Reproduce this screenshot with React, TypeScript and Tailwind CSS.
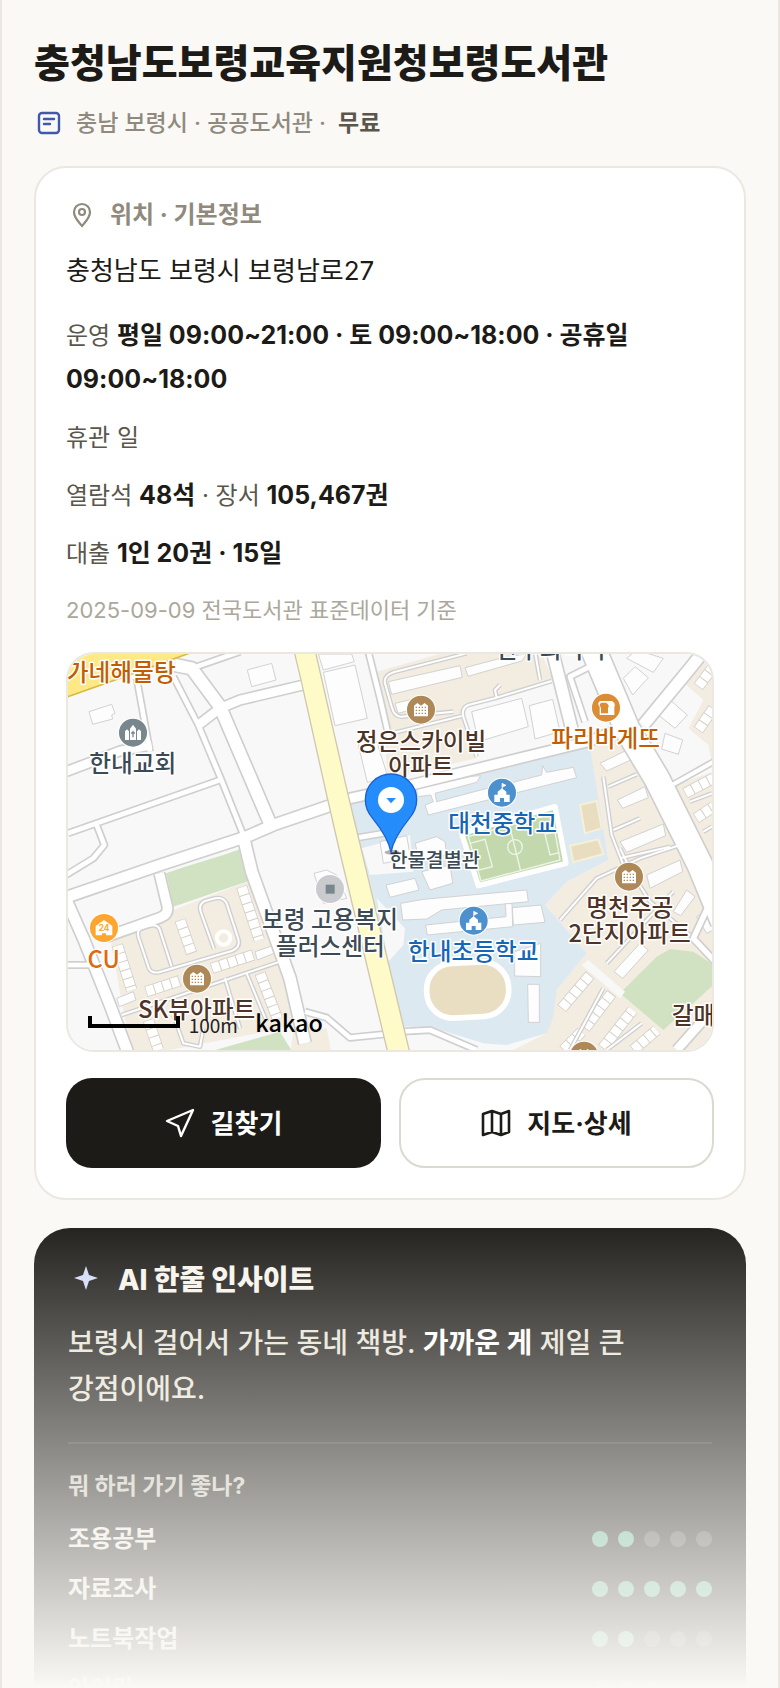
import type { ReactNode } from "react";

type Point = { label: string; score: number };

type Road = { d: string; w: number };

type MapLabel = {
  text: string;
  x: number;
  y: number;
  fill: string;
  size?: number;
  anchor?: "start" | "middle" | "end";
};

const points: Point[] = [
  { label: "조용공부", score: 2 },
  { label: "자료조사", score: 5 },
  { label: "노트북작업", score: 2 },
  { label: "아이랑", score: 3 },
];

const roads: Road[] = [
  { d: "M24 565 L480 405", w: 14 },
  { d: "M110 540 L133 600 L100 640 L10 695", w: 14 },
  { d: "M230 100 L270 320", w: 14 },
  { d: "M10 383 L180 318 L275 300", w: 26 },
  { d: "M410 65 L540 20", w: 14 },
  { d: "M340 95 L415 240 L480 395 L550 570", w: 14 },
  { d: "M345 60 L395 70 L480 185 L632 540", w: 36 },
  { d: "M415 240 L480 190 L540 165 L730 120", w: 26 },
  { d: "M10 760 L300 660 L560 575 L640 540 L830 475", w: 32 },
  { d: "M550 575 L575 680 L690 1000 L735 1195", w: 34 },
  { d: "M10 745 L70 880 L150 1080 L210 1240", w: 32 },
  { d: "M298 685 L322 785 Q326 808 300 818 L140 875", w: 28 },
  { d: "M10 960 L100 960", w: 14 },
  { d: "M925 20 L960 160 L990 290", w: 14 },
  { d: "M862 462 L1060 418 L1590 288 L1730 230", w: 28 },
  { d: "M880 580 L1000 560", w: 14 },
  { d: "M1475 10 L1540 270", w: 34 },
  { d: "M1595 0 L1700 250 L1790 400 L1920 660 L1990 830", w: 74 },
  { d: "M1750 240 L1890 70 L1930 20", w: 34 },
  { d: "M1575 230 L1530 95 L1620 50", w: 14 },
  { d: "M1840 418 L1970 345", w: 12 },
  { d: "M735 1100 L800 1118 L870 1178 L1000 1165", w: 14 },
  { d: "M1020 1160 L1110 1155 L1250 1215", w: 14 },
  { d: "M1956 760 L1900 880 L1965 950", w: 16 },
  { d: "M1850 1215 L1970 1080", w: 26 },
];

const lanes = [
  "M1180 200 L1025 215 Q1003 216 995 185 L975 115 Q970 92 1000 82 L1220 25",
  "M1425 20 L1440 105",
  "M975 270 L1205 213 M1250 335 L1210 215 Q1203 190 1225 180 L1310 158 L1305 135 L1320 120 M1310 158 L1475 108",
  "M1630 395 L1655 570 L1690 660 M1645 425 L1730 388 M1660 555 L1740 520 M1680 640 L1830 605",
  "M1500 825 L1610 700 L1740 640 L1860 600",
  "M1680 610 L1720 690 L1770 770 L1890 870 M1640 955 L1840 740",
  "M1530 1215 L1630 1030 M1640 1215 L1745 1135 M1890 470 L1956 445 M1930 560 L1956 545",
  "M335 965 L298 850 Q290 838 270 842 L245 850 Q230 855 235 875 L265 965 Q272 988 300 981 L515 918 Q542 908 535 882 L500 775 Q490 755 465 760 L435 768 Q415 777 422 800 L462 912",
  "M185 1110 L660 950 M495 1000 L540 1150 M560 985 L620 1130 M340 1110 L370 1195 L420 1205 L430 1150",
];

const houseRows = [
  "M1505 1090 L1590 990",
  "M1575 1150 L1655 1045",
  "M1628 1210 L1718 1095",
  "M1720 1215 L1790 1155",
  "M1510 1215 L1565 1160",
  "M1875 445 L1960 400",
  "M1915 125 L1960 65",
  "M1915 255 L1960 190",
  "M1908 520 L1960 485",
  "M258 1040 L360 1007",
  "M455 970 L580 930",
  "M600 985 L652 1120",
  "M545 725 L598 885",
  "M172 900 L215 1035",
  "M360 825 L395 925",
  "M265 1125 L295 1215",
];

const buildings = [
  "87,200 155,178 165,205 155,210 158,222 98,238",
  "562,75 635,55 648,105 575,125",
  "790,82 885,60 922,220 825,242",
  "775,27 875,27 883,50 790,75",
  "895,300 950,290 985,400 922,412",
  "985,110 1200,62 1207,97 995,148",
  "1215,68 1340,35 1400,27 1385,48 1224,94",
  "1005,175 1060,162 1070,190 1014,205",
  "1235,200 1385,160 1405,245 1255,290",
  "1408,182 1478,163 1500,260 1425,282",
  "1070,430 1235,394 1262,392 1250,412 1125,445 1130,470 1300,425 1310,405 1320,422 1445,390 1448,362 1460,382 1540,367 1550,398 1105,510 1095,480 1120,470 1112,450 1072,455",
  "960,590 1040,572 1052,640 970,655",
  "1065,595 1130,575 1155,590 1160,630 1078,640",
  "1620,355 1695,318 1712,345 1640,378",
  "1672,465 1755,425 1765,458 1688,490",
  "1680,590 1810,537 1817,572 1700,622",
  "1690,100 1725,65 1765,98 1718,150",
  "1795,210 1830,165 1882,210 1845,250",
  "1815,265 1868,285 1855,328 1805,312",
  "1700,40 1730,15 1810,40 1780,82",
  "978,720 1065,700 1077,735 990,757",
  "1085,680 1170,660 1178,715 1110,735",
  "1022,775 1090,763 1400,735 1405,770 1145,795 1100,822 1028,825",
  "1097,840 1338,815 1336,776 1356,776 1358,845 1102,870",
  "1357,788 1443,780 1455,832 1360,840",
  "1364,920 1442,895 1442,995 1364,993",
  "1403,1018 1438,1018 1438,1132 1405,1132",
  "1760,690 1860,645 1868,680 1770,730",
  "1840,800 1880,735 1905,755 1862,812",
  "1662,980 1740,895 1765,915 1688,1000",
  "1910,815 1935,800 1970,850 1940,865",
  "762,685 800,675 830,690 860,760 790,775",
  "170,1060 220,1040 228,1065 178,1085",
  "585,920 635,903 642,925 592,945",
];

const labels: MapLabel[] = [
  { text: "가네해물탕", x: 347, y: 107, fill: "#c25e00", anchor: "end" },
  { text: "한내교회", x: 218, y: 382, fill: "#3b4a54" },
  { text: "한우최석댁", x: 1472, y: 38, fill: "#3b4a54" },
  { text: "정은스카이빌", x: 1083, y: 316, fill: "#4d3426" },
  { text: "아파트", x: 1083, y: 391, fill: "#4d3426" },
  { text: "파리바게뜨", x: 1637, y: 306, fill: "#c25e00" },
  { text: "대천중학교", x: 1328, y: 561, fill: "#1666b5" },
  { text: "한물결별관", x: 1124, y: 666, fill: "#3b4a54", size: 59 },
  { text: "명천주공", x: 1709, y: 814, fill: "#4d3426" },
  { text: "2단지아파트", x: 1709, y: 892, fill: "#4d3426" },
  { text: "보령 고용복지", x: 810, y: 850, fill: "#3b4a54" },
  { text: "플러스센터", x: 811, y: 929, fill: "#3b4a54" },
  { text: "한내초등학교", x: 1240, y: 944, fill: "#1666b5" },
  { text: "CU", x: 131, y: 968, fill: "#e0690b" },
  { text: "SK뷰아파트", x: 410, y: 1119, fill: "#4d3426" },
  { text: "갈매", x: 1835, y: 1137, fill: "#4d3426", anchor: "start" },
];

function Marker({ x, y, color, children }: { x: number; y: number; color: string; children?: ReactNode }) {
  return (
    <g transform={`translate(${x} ${y})`}>
      <circle r="45" fill="#fff" />
      <circle r="42" fill={color} />
      {children}
    </g>
  );
}

function Apartment({ x, y }: { x: number; y: number }) {
  return (
    <Marker x={x} y={y} color="#ae8856">
      <path d="M-21 20 V-12 L-11 -20 L0 -12 L11 -20 L21 -12 V20 Z" fill="#fff" />
      <path d="M-16 -7 H17 M-16 2 H17 M-16 11 H17" stroke="#ae8856" strokeWidth="4" strokeDasharray="4 5" />
    </Marker>
  );
}

function School({ x, y }: { x: number; y: number }) {
  return (
    <Marker x={x} y={y} color="#4c90cd">
      <path d="M-23 28 V6 H-13 V-3 L0 -13 L13 -3 V6 H23 V28 H6 V16 H-6 V28 Z" fill="#fff" />
      <path d="M0 -10 V-28 L12 -22 L2 -17" fill="#fff" stroke="#fff" strokeWidth="2" />
    </Marker>
  );
}

function LibraryMap() {
  return (
    <svg viewBox="24 27 1932 1188" preserveAspectRatio="xMidYMid slice" className="block h-full w-full" role="img" aria-label="지도">
      <rect x="0" y="0" width="2000" height="1260" fill="#f8f8f9" />

      {/* land use */}
      <path d="M950 80 L1180 15 L1440 15 L1480 105 L1310 158 L1225 180 L1205 213 L1250 340 L985 400 Z" fill="#f3ece0" />
      <path d="M1590 310 L1720 240 L1970 770 V1230 H1330 L1460 1165 L1490 1035 L1580 925 L1455 780 L1520 710 L1645 645 Z" fill="#f3ece0" />
      <path d="M1960 20 L1895 75 L1860 125 L1930 165 L1885 250 L1945 300 L1960 380 L1845 420 L1960 690 Z" fill="#f3ece0" />
      <path d="M1845 90 L1930 165 L1885 250 L1945 310 L1940 360 L1845 400 L1780 270 Z" fill="#f8f8f9" />
      <path d="M150 880 L340 795 L565 708 L735 1130 L590 1165 L250 1230 L215 1230 Z" fill="#f3ece0" />
      <path d="M700 1160 L800 1150 L815 1230 H690 Z" fill="#f3ece0" />
      <path d="M865 470 L1060 440 L1590 305 L1645 645 L1520 710 L1455 780 L1580 925 L1490 1035 L1480 1115 L1460 1165 L1340 1200 L1270 1195 L1110 1145 L1030 1145 L925 690 Z" fill="#dce9f1" />
      <path d="M905 610 L1050 570 L1060 680 L930 690 Z M950 760 L1035 850 L1030 900 L985 950 Z" fill="#f8f8f9" />
      <path d="M318 685 L375 665 L490 630 L540 613 L565 708 L340 785 Z" fill="#d0e2c1" />
      <path d="M1680 1045 L1790 935 L1830 912 L1900 920 L1960 960 V1020 L1810 1155 Z" fill="#d0e2c1" />
      <path d="M430 1225 L660 1160 L700 1225 Z" fill="#d0e2c1" />
      <path d="M1565 960 L1585 945 L1695 1040 L1680 1060 Z" fill="#f8f8f9" />

      {/* school grounds */}
      <path d="M1205 565 L1485 485 L1518 655 L1255 722 Z" fill="#c3d9ad" stroke="#fff" strokeWidth="16" strokeLinejoin="round" />
      <g fill="none" stroke="#edf5e6" strokeWidth="4">
        <path d="M1225 575 L1475 507 L1500 645 L1263 708 Z M1348 540 L1382 678" />
        <circle cx="1365" cy="606" r="22" />
        <path d="M1230 595 L1275 583 L1297 665 L1252 676 M1484 560 L1455 568 L1470 630 L1498 623" />
      </g>
      <path d="M1560 480 L1610 468 L1625 550 L1575 565 Z M1530 602 L1615 583 L1630 627 L1540 652 Z" fill="#e9ddbf" stroke="#f6efda" strokeWidth="6" />
      <rect x="1100" y="953" width="246" height="164" rx="78" fill="#e9dec2" stroke="#fff" strokeWidth="17" transform="rotate(-3 1223 1035)" />

      {/* buildings */}
      <g fill="#fdfdfd" stroke="#d2d2d2" strokeWidth="3">
        {buildings.map(b => (
          <polygon key={b} points={b} />
        ))}
      </g>
      <g fill="none">
        {houseRows.map(d => (
          <g key={d}>
            <path d={d} stroke="#d4d0c9" strokeWidth="34" />
            <path d={d} stroke="#fff" strokeWidth="29" strokeDasharray="23 3" strokeDashoffset="-2" />
          </g>
        ))}
      </g>

      {/* roads: grey edges first, then the white surface */}
      <g fill="none" strokeLinejoin="round">
        {lanes.map(d => (
          <path key={d} d={d} stroke="#cfcfcf" strokeWidth="14" />
        ))}
        {roads.map(r => (
          <path key={r.d} d={r.d} stroke="#cfcfcf" strokeWidth={r.w + 10} />
        ))}
        {lanes.map(d => (
          <path key={d} d={d} stroke="#fff" strokeWidth="6" />
        ))}
        {roads.map(r => (
          <path key={r.d} d={r.d} stroke="#fff" strokeWidth={r.w} />
        ))}
      </g>
      <path d="M700 10 L722 100 L800 450 L838 615 L985 1230 H1051 L965 870 L908 630 L862 440 L764 10 Z" fill="#fffbc9" stroke="#cfc8ae" strokeWidth="4" />
      <path d="M10 160 L250 75 L395 22 H10 Z" fill="#ffe985" stroke="#d8bb45" strokeWidth="5" />
      <path d="M10 10 H130 L10 60 Z" fill="#f8f8f9" />
      <circle cx="491" cy="879" r="20" fill="#f3ece0" stroke="#fff" strokeWidth="12" />

      {/* places */}
      <Marker x={219} y={263} color="#78868d">
        <path d="M-24 22 V-4 L-18 -10 L-12 -4 V22 Z M-9 22 V-12 L0 -24 L9 -12 V22 Z M12 22 V-4 L18 -10 L24 -4 V22 Z" fill="#fff" />
        <path d="M0 -6 V14 M-6 1 H6" stroke="#78868d" strokeWidth="4" />
      </Marker>
      <Apartment x={1083} y={194} />
      <Apartment x={411} y={1001} />
      <Apartment x={1707} y={695} />
      <Apartment x={1572} y={1232} />
      <School x={1326} y={443} />
      <School x={1241} y={827} />
      <Marker x={1638} y={188} color="#dc8c34">
        <path d="M-18 -20 H18 Q30 -14 25 -1 V22 H-19 V-2 Q-28 -14 -18 -20 Z" fill="#fff" />
        <path d="M-14 -15 H0 Q12 -8 6 1 V17 H-15 V0 Q-23 -10 -14 -15 Z" fill="#dc8c34" />
      </Marker>
      <Marker x={810} y={732} color="#c9cbcf">
        <rect x="-13" y="-13" width="27" height="27" fill="#78868d" />
      </Marker>
      <Marker x={132} y={849} color="#fda62f">
        <path d="M-25 -6 L0 -24 L25 -6 V22 H6 V16 H-6 V22 H-25 Z" fill="#fff" />
        <text y="10" fontSize="25" fontWeight="700" textAnchor="middle" fill="#fda62f">24</text>
      </Marker>

      <g
        fontSize="71"
        fontWeight="500"
        stroke="#fff"
        strokeWidth="9"
        strokeLinejoin="round"
        paintOrder="stroke"
        className="font-['Noto_Sans_CJK_KR',sans-serif]"
      >
        {labels.map(l => (
          <text key={l.text} x={l.x} y={l.y} fill={l.fill} fontSize={l.size} textAnchor={l.anchor ?? "middle"}>
            {l.text}
          </text>
        ))}
      </g>

      <path d="M90 1113 V1143 H354 V1113" fill="none" stroke="#000" strokeWidth="12" />
      <text x="386" y="1165" fontSize="57" fill="#222" className="font-['Noto_Sans_CJK_KR',sans-serif]">100m</text>
      <text x="586" y="1161" fontSize="70" fontWeight="500" fill="#000" className="font-['Noto_Sans_CJK_KR',sans-serif]">kakao</text>

      {/* the library itself */}
      <ellipse cx="996" cy="622" rx="22" ry="7" fill="#000" opacity="0.3" />
      <path d="M993 622 Q985 578 938 520 Q916 494 916 464 A77 77 0 0 1 1070 464 Q1070 494 1048 520 Q1001 578 993 622 Z" fill="#258dfb" stroke="#1a62d4" strokeWidth="4" />
      <circle cx="993" cy="465" r="39" fill="#fff" />
      <path d="M979 459 H1008 L993 475 Z" fill="#258dfb" />
    </svg>
  );
}

function Dots({ score }: { score: number }) {
  return (
    <div className="flex gap-[10px]" role="img" aria-label={`${score}/5`}>
      {[1, 2, 3, 4, 5].map(n => (
        <span key={n} className={n <= score ? "size-4 rounded-full bg-[#5cb190]" : "size-4 rounded-full bg-white/20"} />
      ))}
    </div>
  );
}

export default function App() {
  return (
    <div className="relative h-screen overflow-hidden border-x-2 border-[#ebe8e1] bg-[#faf9f5] px-8 pt-[38px] font-['Inter','Noto_Sans_CJK_KR',sans-serif] text-[#1d1b17] break-keep">
      <header>
        <h1 className="text-[39px] leading-[50px] font-extrabold">충청남도보령교육지원청보령도서관</h1>
        <div className="mt-[18px] flex items-center gap-3 text-[23px] leading-[34px] font-medium text-[#8f8a7d]">
          <svg viewBox="0 0 30 30" className="size-[30px]" fill="none" stroke="#4059ad" strokeWidth="2.4" strokeLinecap="round">
            <rect x="5" y="5" width="20" height="20" rx="3" />
            <path d="M10 11h10M10 16h6" />
          </svg>
          <span>충남 보령시 · 공공도서관 ·</span>
          <b className="font-semibold text-[#5a564c]">무료</b>
        </div>
      </header>

      <section className="mt-[26px] rounded-[32px] border-2 border-[#ebe8e1] bg-white p-[30px]">
        <h2 className="flex items-center gap-3 text-2xl leading-[34px] font-bold text-[#8f8a7d]">
          <svg viewBox="0 0 32 32" className="size-8" fill="none" stroke="currentColor" strokeWidth="2.2" strokeLinejoin="round">
            <path d="M16 27c-3-4-8-8-8-14a8 8 0 0 1 16 0c0 6-5 10-8 14z" />
            <circle cx="16" cy="13" r="3" />
          </svg>
          위치 · 기본정보
        </h2>
        <p className="mt-5 text-[26px] leading-[38px]">충청남도 보령시 보령남로27</p>
        <div className="mt-6 space-y-[14px] text-2xl leading-[44px] text-[#5a564c] [&_b]:text-[25px] [&_b]:leading-none [&_b]:font-bold [&_b]:text-[#1d1b17]">
          <p>운영 <b>평일 09:00~21:00 · 토 09:00~18:00 · 공휴일 09:00~18:00</b></p>
          <p>휴관 일</p>
          <p>열람석 <b>48석</b> · 장서 <b>105,467권</b></p>
          <p>대출 <b>1인 20권 · 15일</b></p>
        </div>
        <p className="mt-[18px] text-[22px] leading-8 text-[#aca79b]">2025-09-09 전국도서관 표준데이터 기준</p>

        <div className="mt-[26px] h-[400px] overflow-hidden rounded-[28px] border-2 border-[#ebe8e1]">
          <LibraryMap />
        </div>

        <div className="mt-[26px] grid grid-cols-2 gap-[18px] text-[26px] font-bold">
          <button type="button" className="flex h-[90px] items-center justify-center gap-4 rounded-[26px] bg-[#1d1b17] text-white">
            <svg viewBox="0 0 30 30" className="size-[30px]" fill="none" stroke="currentColor" strokeWidth="2.4" strokeLinejoin="round">
              <path d="M28 2 2 13l11 5 3 10z" />
            </svg>
            길찾기
          </button>
          <button type="button" className="flex h-[90px] items-center justify-center gap-4 rounded-[26px] border-2 border-[#dcd9d0] bg-white">
            <svg viewBox="0 0 30 30" className="size-[30px]" fill="none" stroke="currentColor" strokeWidth="2.6" strokeLinejoin="round">
              <path d="M2 6l9-3 9 3 8-3v21l-8 3-9-3-9 3zM11 3v21M20 6v21" />
            </svg>
            지도·상세
          </button>
        </div>
      </section>

      <section className="mt-7 rounded-[36px] bg-[#1d1b17] px-[34px] py-8 text-[#efece4]">
        <h2 className="flex items-center gap-[14px] text-[28px] leading-10 font-extrabold text-[#f7f4ec]">
          <svg viewBox="0 0 36 36" className="size-9" fill="#d3dcf8">
            <path d="M18 4l3 9 9 3-9 3-3 9-3-9-9-3 9-3z" />
          </svg>
          AI 한줄 인사이트
        </h2>
        <p className="mt-5 text-[28px] leading-[46px] font-medium text-[#e8e4d9]">
          보령시 걸어서 가는 동네 책방. <b className="font-bold text-white">가까운 게</b> 제일 큰 강점이에요.
        </p>
        <hr className="mt-[30px] border-t-2 border-white/10" />
        <h3 className="mt-[26px] text-[23px] leading-8 font-bold text-[#cbc7bb]">뭐 하러 가기 좋나?</h3>
        <ul className="mt-3">
          {points.map(p => (
            <li key={p.label} className="flex h-[50px] items-center justify-between text-2xl font-semibold">
              {p.label}
              <Dots score={p.score} />
            </li>
          ))}
        </ul>
      </section>

      <div className="pointer-events-none absolute inset-x-0 bottom-0 h-[480px] bg-linear-to-b from-[#faf9f5]/0 to-[#faf9f5]" />
    </div>
  );
}
